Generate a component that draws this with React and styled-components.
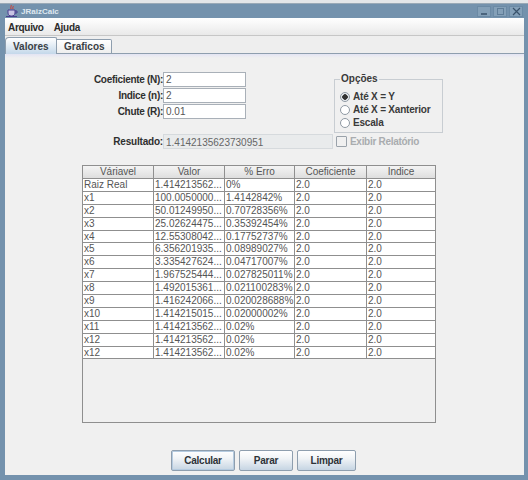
import React from 'react'
import styled, { createGlobalStyle } from 'styled-components'

const rows = [
  ['Raiz Real', '1.414213562...', '0%'],
  ['x1', '100.0050000...', '1.4142842%'],
  ['x2', '50.01249950...', '0.70728356%'],
  ['x3', '25.02624475...', '0.35392454%'],
  ['x4', '12.55308042...', '0.17752737%'],
  ['x5', '6.356201935...', '0.08989027%'],
  ['x6', '3.335427624...', '0.04717007%'],
  ['x7', '1.967525444...', '0.027825011%'],
  ['x8', '1.492015361...', '0.021100283%'],
  ['x9', '1.416242066...', '0.020028688%'],
  ['x10', '1.414215015...', '0.02000002%'],
  ['x11', '1.414213562...', '0.02%'],
  ['x12', '1.414213562...', '0.02%'],
  ['x12', '1.414213562...', '0.02%'],
]

export default function App() {
  return (
    <Window>
      <GlobalStyle />
      <TitleBar>
        <svg width="14" height="14" viewBox="0 0 14 14">
          <path d="M3 6h7v3c0 2-1.500 3-3.500 3S3 11 3 9z" fill="#c9c4e4" stroke="#4a3f8f" />
          <path d="M10 7h2v2h-2M1 12.500h11" fill="none" stroke="#4a3f8f" />
          <path d="M6 1c1 1-1 2 0 4M8 2c1 1-1 1 0 3" fill="none" stroke="#d23b2e" />
        </svg>
        <TitleText>JRaizCalc</TitleText>
        <WindowButtons>
          <WindowButton>
            <svg width="9" height="9" viewBox="0 0 9 9"><path d="M1 7h6" stroke="#39526b" strokeWidth="1.500" /></svg>
          </WindowButton>
          <WindowButton>
            <svg width="9" height="9" viewBox="0 0 9 9"><rect x="1.500" y="1.500" width="6" height="6" fill="none" stroke="#5f7d98" /></svg>
          </WindowButton>
          <WindowButton>
            <svg width="9" height="9" viewBox="0 0 9 9"><path d="M1 1l7 7M8 1L1 8" stroke="#39526b" strokeWidth="1.200" /></svg>
          </WindowButton>
        </WindowButtons>
      </TitleBar>

      <MenuBar>
        <span>Arquivo</span>
        <span>Ajuda</span>
      </MenuBar>

      <TabRow>
        <Tab $active>Valores</Tab>
        <Tab>Graficos</Tab>
      </TabRow>

      <Panel>
        <TopArea>
          <FieldGrid>
            <FieldLabel>Coeficiente (N):</FieldLabel>
            <TextField>2</TextField>
            <FieldLabel>Indice (n):</FieldLabel>
            <TextField>2</TextField>
            <FieldLabel>Chute (R):</FieldLabel>
            <TextField>0.01</TextField>
          </FieldGrid>
          <OptionsBox>
            <legend>Opções</legend>
            <Radio $checked>Até X = Y</Radio>
            <Radio>Até X = Xanterior</Radio>
            <Radio>Escala</Radio>
          </OptionsBox>
        </TopArea>

        <ResultRow>
          <ResultLabel>Resultado:</ResultLabel>
          <ResultField>1.4142135623730951</ResultField>
          <CheckBox />
          <DisabledText>Exibir Relatório</DisabledText>
        </ResultRow>

        <TableBox>
          <HeaderRow>
            <HeaderCell>Váriavel</HeaderCell>
            <HeaderCell>Valor</HeaderCell>
            <HeaderCell>% Erro</HeaderCell>
            <HeaderCell>Coeficiente</HeaderCell>
            <HeaderCell>Indice</HeaderCell>
          </HeaderRow>
          {rows.map((r, i) => (
            <BodyRow key={i}>
              <Cell>{r[0]}</Cell>
              <Cell>{r[1]}</Cell>
              <Cell>{r[2]}</Cell>
              <Cell>2.0</Cell>
              <Cell>2.0</Cell>
            </BodyRow>
          ))}
        </TableBox>

        <ButtonRow>
          <Button $width={64} $focused>Calcular</Button>
          <Button $width={54}>Parar</Button>
          <Button $width={59}>Limpar</Button>
        </ButtonRow>
      </Panel>
    </Window>
  )
}

const GlobalStyle = createGlobalStyle`
  html, body {
    margin: 0;
    padding: 0;
    background: #e4e6e8;
  }
  body {
    font-family: "Liberation Sans", Arial, sans-serif;
    font-size: 10px;
    color: #333;
  }
`

const Window = styled.div`
  box-sizing: border-box;
  width: 528px;
  height: 477px;
  margin-top: 3px;
  display: flex;
  flex-direction: column;
  background: #7492ad;
  padding: 0 4px 5px 5px;
  border-top: 1px solid #9aa9b6;
`

const TitleBar = styled.div`
  height: 14px;
  display: flex;
  align-items: center;
  gap: 2px;
  margin: 0 1px 0 0;
`

const TitleText = styled.span`
  font-size: 8px;
  font-weight: bold;
  color: #dfe8f0;
`

const WindowButtons = styled.div`
  margin-left: auto;
  display: flex;
  gap: 2px;
`

const WindowButton = styled.div`
  width: 14px;
  height: 11px;
  display: flex;
  align-items: center;
  justify-content: center;
  background: #84a0b8;
  border: 1px solid #6b8aa5;
  box-sizing: border-box;
`

const MenuBar = styled.div`
  height: 18px;
  box-sizing: border-box;
  display: flex;
  align-items: center;
  gap: 10px;
  padding: 1px 0 0 3px;
  background: linear-gradient(#ffffff, #e9e9e9);
  border-bottom: 1px solid #c6c6c6;
  font-weight: bold;
  letter-spacing: -0.3px;
  color: #2b2b2b;
`

const TabRow = styled.div`
  height: 18px;
  box-sizing: border-box;
  display: flex;
  align-items: flex-end;
  padding-left: 0;
  background: #eeeeee;
  border-bottom: 1px solid #8e9eae;
`

const Tab = styled.div`
  box-sizing: border-box;
  height: ${p => (p.$active ? '17px' : '15px')};
  width: ${p => (p.$active ? '52px' : '55px')};
  margin-bottom: -1px;
  padding: 0 0 0 7px;
  display: flex;
  align-items: center;
  font-weight: bold;
  color: #3a3f45;
  border: 1px solid #8e9eae;
  border-left: ${p => (p.$active ? '1px solid #8e9eae' : '0')};
  border-radius: ${p => (p.$active ? '4px 2px 0 0' : '0 2px 0 0')};
  border-bottom: ${p => (p.$active ? '0' : '1px solid #8e9eae')};
  background: ${p => (p.$active ? 'linear-gradient(#ffffff, #c4d8ea)' : 'linear-gradient(#ffffff, #eeeeee)')};
`

const Panel = styled.div`
  flex: 1;
  min-height: 0;
  display: flex;
  flex-direction: column;
  background: linear-gradient(#e3e4f3, #f0f0f0 4px);
  padding-top: 18px;
`

const TopArea = styled.div`
  display: flex;
  align-items: flex-start;
`

const FieldGrid = styled.div`
  display: grid;
  grid-template-columns: 158px 83px;
  grid-auto-rows: 15px;
  row-gap: 1px;
`

const FieldLabel = styled.label`
  text-align: right;
  line-height: 15px;
  font-weight: bold;
  letter-spacing: -0.3px;
  color: #2f2f2f;
`

const TextField = styled.div`
  box-sizing: border-box;
  border: 1px solid #a9b0b8;
  background: #fff;
  padding-left: 2px;
  line-height: 14px;
  color: #555;
`

const OptionsBox = styled.fieldset`
  box-sizing: border-box;
  width: 109px;
  height: 60px;
  margin: 1px 0 0 88px;
  padding: 5px 0 0 5px;
  border: 1px solid #c8cdd2;
  display: flex;
  flex-direction: column;
  legend {
    padding: 0 1px;
    margin-left: 0;
    font-weight: bold;
    line-height: 12px;
    color: #3a3a3a;
  }
`

const Radio = styled.div`
  height: 13px;
  display: flex;
  align-items: center;
  gap: 3px;
  font-weight: bold;
  letter-spacing: -0.2px;
  color: #3a3a3a;
  &::before {
    content: '';
    box-sizing: border-box;
    width: 10px;
    height: 10px;
    border-radius: 50%;
    border: 1px solid #8f99a3;
    background: ${p => (p.$checked ? 'radial-gradient(circle, #333 0, #333 2.500px, #e8ecf0 3px)' : '#fff')};
  }
`

const ResultRow = styled.div`
  display: flex;
  align-items: center;
  height: 15px;
  margin-top: 1px;
`

const ResultLabel = styled.label`
  width: 158px;
  text-align: right;
  font-weight: bold;
  letter-spacing: -0.2px;
  color: #2f2f2f;
`

const ResultField = styled.div`
  box-sizing: border-box;
  width: 170px;
  height: 15px;
  line-height: 15px;
  padding-left: 2px;
  background: #e9ebec;
  border: 1px solid #d6dadd;
  color: #666;
`

const CheckBox = styled.div`
  box-sizing: border-box;
  width: 11px;
  height: 11px;
  margin-left: 3px;
  border: 1px solid #9aa2aa;
  border-radius: 1px;
`

const DisabledText = styled.span`
  margin-left: 3px;
  font-weight: bold;
  letter-spacing: -0.3px;
  color: #a9acaf;
`

const TableBox = styled.div`
  box-sizing: border-box;
  width: 354px;
  height: 258px;
  margin: 16px 0 0 77px;
  border: 1px solid #8f8f8f;
`

const columns = '71px 71px 70px 72px 68px'

const HeaderRow = styled.div`
  display: grid;
  grid-template-columns: ${columns};
  height: 13px;
`

const HeaderCell = styled.div`
  box-sizing: border-box;
  text-align: center;
  line-height: 12px;
  color: #555;
  background: linear-gradient(#f4f4f4, #dedede);
  border-right: 1px solid #8f8f8f;
  border-bottom: 1px solid #8f8f8f;
  &:last-child {
    border-right: 0;
  }
`

const BodyRow = styled.div`
  display: grid;
  grid-template-columns: ${columns};
  height: 12.900px;
  background: #fff;
`

const Cell = styled.div`
  box-sizing: border-box;
  padding-left: 1px;
  line-height: 12px;
  color: #555;
  white-space: nowrap;
  overflow: hidden;
  border-right: 1px solid #8f8f8f;
  border-bottom: 1px solid #8f8f8f;
  &:last-child {
    border-right: 0;
  }
`

const ButtonRow = styled.div`
  display: flex;
  gap: 4px;
  margin: 27px 0 0 166px;
`

const Button = styled.div`
  box-sizing: border-box;
  width: ${p => p.$width}px;
  height: 21px;
  display: flex;
  align-items: center;
  justify-content: center;
  font-weight: bold;
  letter-spacing: -0.25px;
  color: #2d3338;
  border: 1px solid #8e9eae;
  border-radius: 2px;
  background: linear-gradient(#ffffff, #f0f3f6 40%, #c6d5e3);
  box-shadow: ${p => (p.$focused ? 'inset 0 0 0 1px #b5cbe0' : 'none')};
`
